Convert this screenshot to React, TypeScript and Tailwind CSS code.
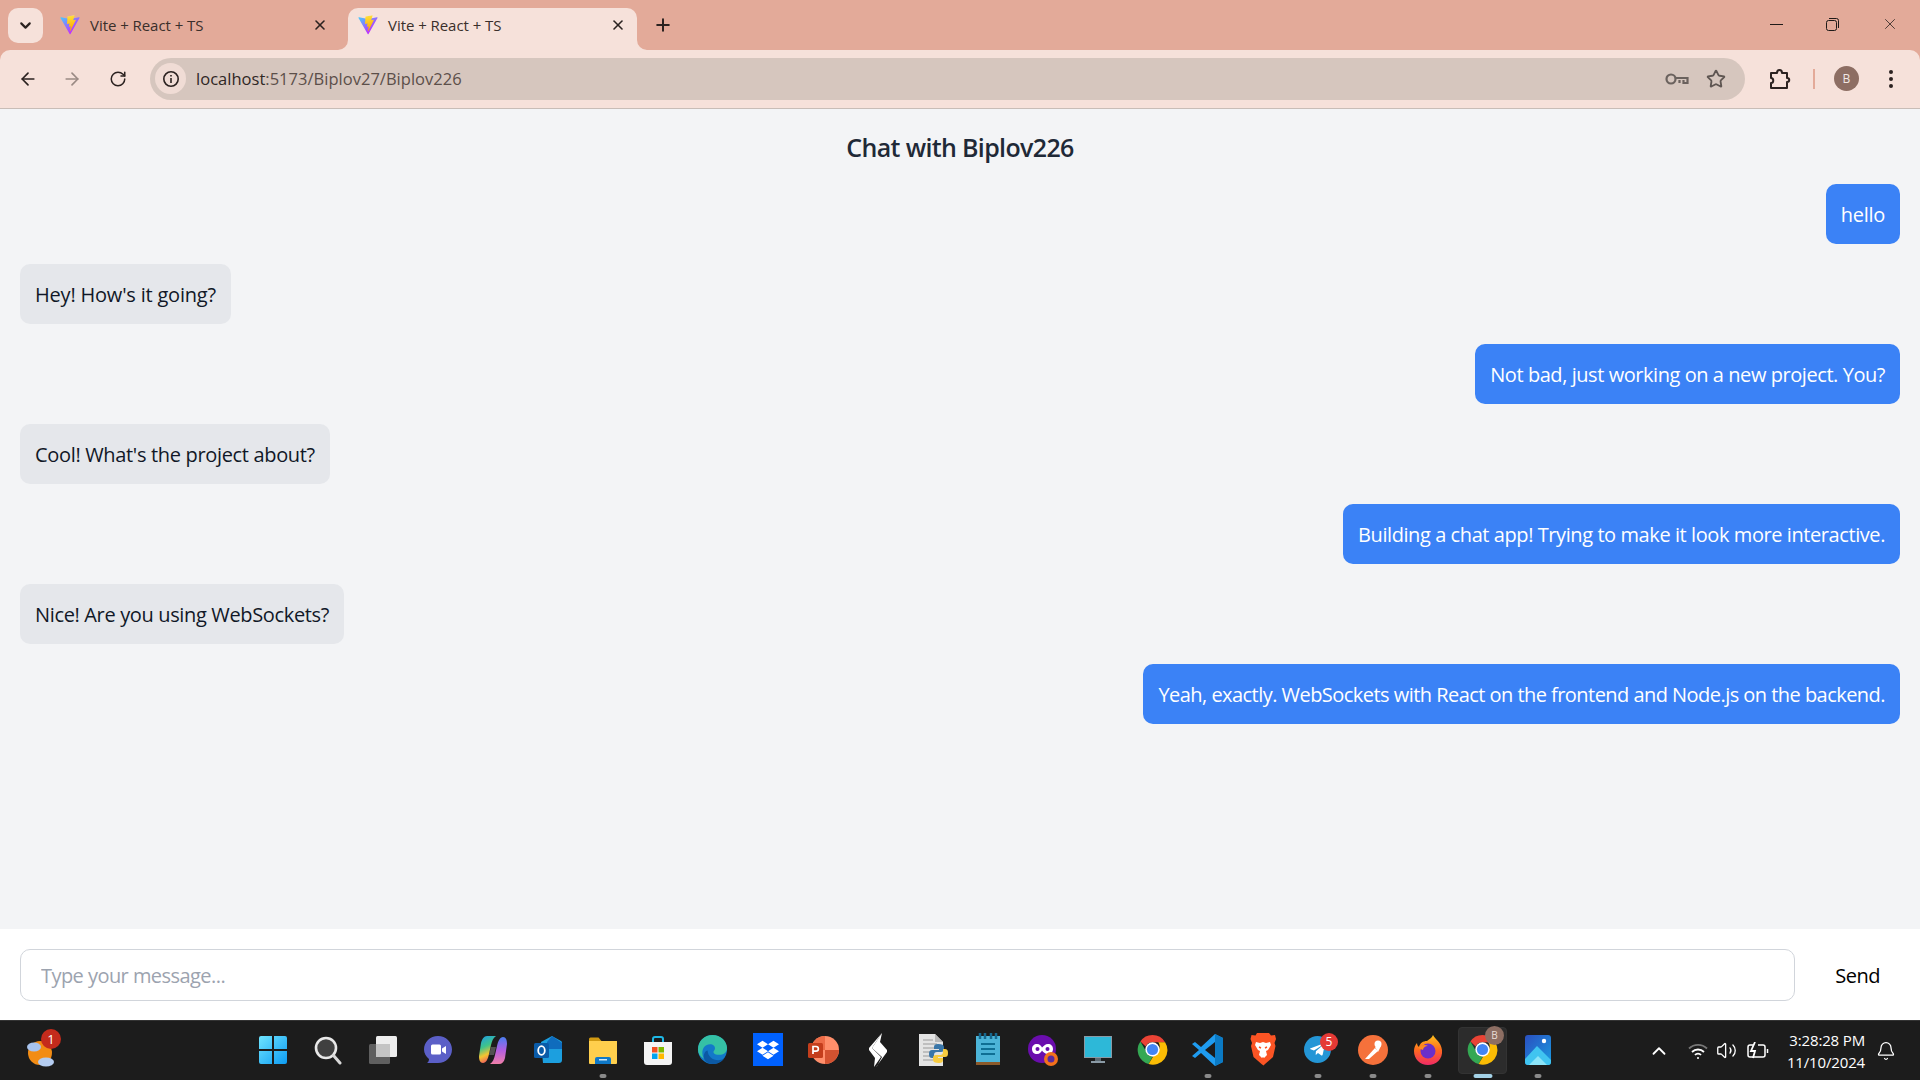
import React from 'react';
import { ArrowLeft, ArrowRight, RotateCw, Star, X, Plus, ChevronDown, ChevronUp, Bell, Volume2 } from 'lucide-react';
import { FaDropbox, FaTelegramPlane } from 'react-icons/fa';

const font = 'font-["Open_Sans","Noto_Sans",sans-serif]';

const messages = [
  { text: 'hello', mine: true, fit: 'tracking-[-0.3px]' },
  { text: "Hey! How's it going?", mine: false, fit: 'tracking-[-0.2px]' },
  { text: 'Not bad, just working on a new project. You?', mine: true, fit: 'tracking-[-0.44px]' },
  { text: "Cool! What's the project about?", mine: false, fit: 'tracking-[-0.33px]' },
  { text: 'Building a chat app! Trying to make it look more interactive.', mine: true, fit: 'tracking-[-0.42px]' },
  { text: 'Nice! Are you using WebSockets?', mine: false, fit: 'tracking-[-0.35px]' },
  { text: 'Yeah, exactly. WebSockets with React on the frontend and Node.js on the backend.', mine: true, fit: 'tracking-[-0.54px]' },
];

const ViteLogo = ({ id }: { id: string }) => (
  <svg width="20" height="20" viewBox="0 0 410 404">
    <defs>
      <linearGradient id={id + 'a'} x1="6" y1="33" x2="235" y2="344" gradientUnits="userSpaceOnUse">
        <stop stopColor="#41D1FF" />
        <stop offset="1" stopColor="#BD34FE" />
      </linearGradient>
      <linearGradient id={id + 'b'} x1="194" y1="8" x2="236" y2="292" gradientUnits="userSpaceOnUse">
        <stop stopColor="#FFEA83" />
        <stop offset="0.08" stopColor="#FFDD35" />
        <stop offset="1" stopColor="#FFA800" />
      </linearGradient>
    </defs>
    <path fill={`url(#${id}a)`} d="M399.641 59.5246L215.643 388.545C211.844 395.338 202.084 395.378 198.228 388.618L10.5817 59.5563C6.38087 52.1896 12.6802 43.2665 21.0281 44.7586L205.223 77.6824C206.398 77.8924 207.601 77.8904 208.776 77.6763L389.119 44.8058C397.439 43.2894 403.768 52.1434 399.641 59.5246Z" />
    <path fill={`url(#${id}b)`} d="M292.965 1.5744L156.801 28.2552C154.563 28.6937 152.906 30.5903 152.771 32.8664L144.395 174.33C144.198 177.662 147.258 180.248 150.51 179.498L188.42 170.749C191.967 169.931 195.172 173.055 194.443 176.622L183.18 231.775C182.422 235.487 185.907 238.661 189.532 237.56L212.947 230.446C216.577 229.344 220.065 232.527 219.297 236.242L201.398 322.875C200.278 328.294 207.486 331.249 210.492 326.603L212.5 323.5L323.454 102.072C325.312 98.3645 322.108 94.137 318.036 94.9228L279.014 102.454C275.347 103.161 272.227 99.746 273.262 96.1583L298.731 7.86689C299.767 4.27314 296.636 0.855181 292.965 1.5744Z" />
  </svg>
);

const Tab = ({ id, active }: { id: string; active?: boolean }) => (
  <div className={`relative w-[289px] h-[42px] flex items-center pl-[10px] pb-[8px] rounded-t-[10px] ${active ? 'bg-[#f6e1da]' : ''}`}>
    {active && (
      <>
        <svg className="absolute left-[-10px] bottom-0" width="10" height="10"><path d="M10 0V10H0A10 10 0 0 0 10 0Z" fill="#f6e1da" /></svg>
        <svg className="absolute right-[-10px] bottom-0" width="10" height="10"><path d="M0 0V10H10A10 10 0 0 1 0 0Z" fill="#f6e1da" /></svg>
      </>
    )}
    <ViteLogo id={id} />
    <span className="ml-[10px] text-[15px] tracking-[-0.05px] text-[#3a2f2b]">Vite + React + TS</span>
    <X className="ml-auto mr-[11px] text-[#2b2220]" size={16} strokeWidth={2.4} />
  </div>
);

const ChromeLogo = () => (
  <svg width="31" height="31" viewBox="0 0 32 32">
    <path d="M16 1a15 15 0 0 1 13 7.5H16A7.5 7.5 0 0 0 9 13L3.5 7.7A15 15 0 0 1 16 1Z" fill="#ea4335" />
    <path d="M3.5 7.7 9.5 18a7.5 7.5 0 0 0 6.5 5.5L12 31A15 15 0 0 1 3.5 7.7Z" fill="#34a853" />
    <path d="M29 8.5A15 15 0 0 1 12 31l6.5-11a7.5 7.5 0 0 0 3.5-11.5Z" fill="#fbbc04" />
    <circle cx="16" cy="16" r="7.4" fill="#fff" />
    <circle cx="16" cy="16" r="5.8" fill="#4285f4" />
  </svg>
);

const Dot = ({ active }: { active?: boolean }) => (
  <span className={`absolute bottom-[2px] left-1/2 -translate-x-1/2 h-[4px] rounded-full ${active ? 'w-[19px] bg-[#a5d3e8]' : 'w-[7px] bg-[#8a8a8a]'}`} />
);

const Slot = ({ children, dot, active }: { children: React.ReactNode; dot?: boolean; active?: boolean }) => (
  <div className={`relative w-[55px] h-[59px] flex items-center justify-center pb-[2px] ${active ? 'after:absolute after:inset-x-[3px] after:inset-y-[6px] after:rounded-[4px] after:bg-[#2c2c2c] after:border after:border-[#333]' : ''}`}>
    <div className="relative z-10 flex items-center justify-center">{children}</div>
    {dot && <span className="z-10"><Dot active={active} /></span>}
  </div>
);

const taskIcons: { icon: React.ReactNode; dot?: boolean; active?: boolean }[] = [
  {
    icon: (
      <svg width="30" height="30" viewBox="0 0 30 30">
        <defs>
          <linearGradient id="win" x1="0" y1="0" x2="1" y2="1">
            <stop stopColor="#6fe5ff" />
            <stop offset="1" stopColor="#0d9bf2" />
          </linearGradient>
        </defs>
        <path fill="url(#win)" d="M1 3a2 2 0 0 1 2-2h11v13H1ZM16 1h11a2 2 0 0 1 2 2v11H16ZM1 16h13v13H3a2 2 0 0 1-2-2ZM16 16h13v11a2 2 0 0 1-2 2H16Z" />
      </svg>
    ),
  },
  {
    icon: (
      <svg width="30" height="30" viewBox="0 0 30 30">
        <circle cx="13" cy="13" r="10" fill="#404040" stroke="#e8e8e8" strokeWidth="2.6" />
        <path d="M20.5 20.5 27 28" stroke="#d8d8d8" strokeWidth="3" strokeLinecap="round" />
      </svg>
    ),
  },
  {
    icon: (
      <svg width="30" height="30" viewBox="0 0 30 30">
        <rect x="8" y="1" width="21" height="21" rx="1.5" fill="#eeeeee" />
        <rect x="1" y="9" width="21" height="20" rx="1.5" fill="#6b6b6b" fillOpacity="0.85" />
        <rect x="8" y="9" width="14" height="13" fill="#c4c4c4" />
      </svg>
    ),
  },
  {
    icon: (
      <svg width="30" height="30" viewBox="0 0 30 30">
        <path d="M15 1c8 0 14 6 14 13.500S23 28 15 28H4c1.500-1 2-2.500 2-4C3 21.500 1 18.500 1 14.500 1 7 7 1 15 1Z" fill="#5b5fc7" />
        <rect x="8" y="9.500" width="10" height="10" rx="1.500" fill="#fff" />
        <path d="M19 13.500 23 11v8l-4-2.500Z" fill="#fff" />
      </svg>
    ),
  },
  {
    icon: (
      <svg width="30" height="30" viewBox="0 0 30 30">
        <defs>
          <linearGradient id="cp1" x1="0" y1="0" x2="0.3" y2="1">
            <stop stopColor="#1d9be8" />
            <stop offset="0.45" stopColor="#3fc48a" />
            <stop offset="0.75" stopColor="#f4c430" />
            <stop offset="1" stopColor="#f0645a" />
          </linearGradient>
          <linearGradient id="cp2" x1="0.5" y1="0" x2="0.5" y2="1">
            <stop stopColor="#4a7df0" />
            <stop offset="0.5" stopColor="#b45ee0" />
            <stop offset="1" stopColor="#f07fa8" />
          </linearGradient>
        </defs>
        <path fill="url(#cp1)" d="M9 1h9c-3 2-4 5-5 9l-2 9c-1 5-3 9-6 9-3 0-4-3-4-7L3 8c1-4 3-7 6-7Z" />
        <path fill="url(#cp2)" d="M21 29h-9c3-2 4-5 5-9l2-9c1-5 3-9 6-9 3 0 4 3 4 7l-2 14c-1 4-3 6-6 6Z" />
        <path fill="#f0f0f0" d="M13 12h5l-2 8h-5Z" fillOpacity="0.25" />
      </svg>
    ),
  },
  {
    icon: (
      <svg width="30" height="30" viewBox="0 0 30 30">
        <path d="M8 7 19 1l9 5a2 2 0 0 1 1 2v17a3 3 0 0 1-3 3H10Z" fill="#1c9fdf" />
        <path d="M14 7 19 1l10 7v6H14Z" fill="#0f6cbd" />
        <rect x="1" y="8" width="15" height="15" rx="1.500" fill="#0a5ba8" />
        <ellipse cx="8.500" cy="15.500" rx="3.300" ry="4.300" fill="none" stroke="#fff" strokeWidth="1.800" />
      </svg>
    ),
  },
  {
    dot: true,
    icon: (
      <svg width="30" height="30" viewBox="0 0 30 30">
        <path d="M1 4a1.500 1.500 0 0 1 1.500-1.500h8l3 3.500H1Z" fill="#d19a12" />
        <path d="M1 6h28v22a1 1 0 0 1-1 1H2a1 1 0 0 1-1-1Z" fill="#ffcf4d" />
        <path d="M7 24a2 2 0 0 1 2-2h12a2 2 0 0 1 2 2v5H7Z" fill="#0f78c7" />
        <rect x="11" y="24" width="8" height="1.500" fill="#cfe8f8" />
      </svg>
    ),
  },
  {
    icon: (
      <svg width="30" height="32" viewBox="0 0 30 32">
        <path d="M10 8V5a2 2 0 0 1 2-2h6a2 2 0 0 1 2 2v3" fill="none" stroke="#1eb8e6" strokeWidth="2" />
        <path d="M1 8h28v20a3 3 0 0 1-3 3H4a3 3 0 0 1-3-3Z" fill="#f4f4f4" />
        <rect x="9" y="13" width="5.500" height="5.500" fill="#f25022" />
        <rect x="15.500" y="13" width="5.500" height="5.500" fill="#7fba00" />
        <rect x="9" y="19.500" width="5.500" height="5.500" fill="#00a4ef" />
        <rect x="15.500" y="19.500" width="5.500" height="5.500" fill="#ffb900" />
      </svg>
    ),
  },
  {
    icon: (
      <svg width="31" height="31" viewBox="0 0 32 32">
        <circle cx="16" cy="16" r="15" fill="#1379c9" />
        <path d="M1 16C1 7 8 1 16 1c8 0 15 6 15 13.500 0 5-4 7-8 7-3 0-6-1-6-3 0-1 1-1.500 1.500-3 .5-3-2-5-5-5-5 0-8 4-8 9 0 2 .5 4 1.500 6C3 23 1 20 1 16Z" fill="#35c1a5" />
        <path d="M11 17c0 6 5 10 11 10 2 0 4-.5 6-2-2 4-7 6-12 6-5 0-9-3-9-8 0-3 2-6 4-6Z" fill="#0c59a4" />
      </svg>
    ),
  },
  {
    icon: (
      <div className="w-[30px] h-[33px] bg-[#0061fe] flex items-center justify-center text-white">
        <FaDropbox size={22} />
      </div>
    ),
  },
  {
    icon: (
      <svg width="32" height="32" viewBox="0 0 32 32">
        <circle cx="18" cy="16" r="14" fill="#ff8f6b" />
        <path d="M18 16h14a14 14 0 0 1-14 14Z" fill="#d35230" />
        <path d="M18 2v14H4A14 14 0 0 1 18 2Z" fill="#ed6c47" />
        <rect x="1" y="9" width="15" height="15" rx="1.500" fill="#c43e1c" />
        <path d="M6 20V12.500h3a2.300 2.300 0 0 1 0 4.700H6" fill="none" stroke="#fff" strokeWidth="1.700" />
      </svg>
    ),
  },
  {
    icon: (
      <svg width="18" height="34" viewBox="0 0 18 34">
        <path d="M13 0 3 15l9 9-7 10 1-9-6-8c-.5-.5-.5-1 0-2Z" fill="#fff" />
        <path d="M13 0 11 9l7 8c.5.5.5 1 0 2L7 34l1-1 5-9-10-9Z" fill="#fff" />
      </svg>
    ),
  },
  {
    icon: (
      <svg width="30" height="34" viewBox="0 0 30 34">
        <path d="M1 1h16l8 8v24H1Z" fill="#e4e4e4" />
        <path d="M5 7h10M5 11h14M5 15h14M5 19h10M5 23h10M5 27h10" stroke="#9a9a9a" strokeWidth="1" />
        <path d="M17 1v8h8Z" fill="#b8b8b8" />
        <path d="M20 11c-3 0-4 1-4 3v2h5v1h-7c-2 0-3 1-3 4 0 3 1 4 3 4h2v-3c0-2 1-3 3-3h4c2 0 3-1 3-3v-2c0-2-2-3-6-3Z" fill="#3a76a8" />
        <path d="M21 30c3 0 4-1 4-3v-2h-5v-1h7c2 0 3-1 3-4s-1-4-3-4h-2v3c0 2-1 3-3 3h-4c-2 0-3 1-3 3v2c0 2 2 3 6 3Z" fill="#f7cb3f" />
      </svg>
    ),
  },
  {
    icon: (
      <svg width="26" height="33" viewBox="0 0 26 33">
        <rect x="1" y="3" width="24" height="27" fill="#4cb4d8" />
        <rect x="1" y="29" width="24" height="3" fill="#8b5a2b" />
        <path d="M5 0v6M10 0v6M16 0v6M21 0v6" stroke="#17688e" strokeWidth="2.500" />
        <path d="M6 11h14M6 16h14M6 21h14" stroke="#0f6f94" strokeWidth="2.200" />
      </svg>
    ),
  },
  {
    icon: (
      <svg width="30" height="32" viewBox="0 0 30 32">
        <circle cx="14" cy="15" r="14" fill="#6a0dad" />
        <path d="M9 10c-3 0-5 2-5 5s2 5 5 5 4-2 5-3.500C15 18 17 20 20 20s5-2 5-5-2-5-5-5-4 2-6 3.500C13 12 12 10 9 10Z" fill="#fff" />
        <circle cx="9.500" cy="15" r="2" fill="#6a0dad" />
        <circle cx="19.500" cy="15" r="2" fill="#6a0dad" />
        <circle cx="23" cy="25" r="7" fill="#f2711c" />
        <circle cx="23" cy="25" r="3.500" fill="#5b2a9d" />
      </svg>
    ),
  },
  {
    icon: (
      <svg width="30" height="30" viewBox="0 0 30 30">
        <rect x="1" y="1" width="28" height="22" fill="#8a9aa5" />
        <rect x="2" y="2" width="26" height="20" fill="#2db8d8" />
        <rect x="12" y="23" width="6" height="3" fill="#5c6a73" />
        <rect x="8" y="26" width="14" height="2" fill="#8a9aa5" />
      </svg>
    ),
  },
  { icon: <ChromeLogo /> },
  {
    dot: true,
    icon: (
      <svg width="32" height="34" viewBox="0 0 32 34">
        <path d="M23 1 31 5v24l-8 4L9 20l-6 5-3-2 7-6-7-6 3-2 6 5Z" fill="#1f9cf0" />
        <path d="M23 9v16l-10-8Z" fill="#1c1c1c" />
        <path d="M23 1l8 4v24l-8 4Z" fill="#0b7ac4" />
      </svg>
    ),
  },
  {
    icon: (
      <svg width="26" height="33" viewBox="0 0 26 33">
        <path d="M7 0h12l2 2.500 4-.5 1 4-1.500 4 1 3-2.500 11-8 7-1.500 1.500L11.500 31l-8-7L1 13l1-3L.5 6l1-4 4 .5Z" fill="#fb5424" />
        <path d="M6 9l4 1 3-1 3 1 4-1 1 3-3 5-2 1 1 4-3 3-1-1-1 1-3-3 1-4-2-1-3-5Z" fill="#fff" />
        <path d="M9 14l2 1M17 14l-2 1" stroke="#fb5424" strokeWidth="1.400" />
      </svg>
    ),
  },
  {
    dot: true,
    icon: (
      <div className="relative">
        <div className="w-[27px] h-[27px] rounded-full bg-[#2496d6] flex items-center justify-center text-white">
          <FaTelegramPlane size={17} />
        </div>
        <span className="absolute -top-[3px] -right-[7px] w-[18px] h-[18px] rounded-full bg-[#e53935] text-white text-[12px] leading-[18px] text-center">5</span>
      </div>
    ),
  },
  {
    dot: true,
    icon: (
      <svg width="30" height="30" viewBox="0 0 30 30">
        <circle cx="15" cy="15" r="15" fill="#f5713b" />
        <path d="M7 24 17 13l3 3-9 8Z" fill="#fff" />
        <circle cx="20" cy="9" r="3.500" fill="#fff" />
        <path d="M17 12l6-1-3 6Z" fill="#fff" />
      </svg>
    ),
  },
  {
    dot: true,
    icon: (
      <svg width="30" height="32" viewBox="0 0 30 32">
        <defs>
          <linearGradient id="ff" x1="0.5" y1="0" x2="0.5" y2="1">
            <stop stopColor="#ffc21c" />
            <stop offset="0.5" stopColor="#ff6a1f" />
            <stop offset="1" stopColor="#f02a66" />
          </linearGradient>
        </defs>
        <path d="M20 1c2 4 8 7 9 15 1 9-6 15-14 15S1 25 1 17c0-3 1-6 3-8 0 2 1 3 2 4 1-4 4-6 8-6 2-2 5-3 6-6Z" fill="url(#ff)" />
        <circle cx="15" cy="17" r="7.500" fill="#6a2fc9" />
        <path d="M5 14c3-3 7-4 10-2-3 0-5 2-5 4Z" fill="#ff8a1f" />
      </svg>
    ),
  },
  {
    dot: true,
    active: true,
    icon: (
      <div className="relative">
        <ChromeLogo />
        <span className="absolute -top-[8px] -right-[6px] w-[19px] h-[19px] rounded-full bg-[#8d6e63] text-[#e8dcd6] text-[10px] leading-[19px] text-center">B</span>
      </div>
    ),
  },
  {
    dot: true,
    icon: (
      <svg width="26" height="30" viewBox="0 0 26 30">
        <defs>
          <linearGradient id="ph" x1="0" y1="0" x2="1" y2="1">
            <stop stopColor="#2a4fc0" />
            <stop offset="1" stopColor="#1a9be0" />
          </linearGradient>
        </defs>
        <rect width="26" height="30" rx="3" fill="url(#ph)" />
        <circle cx="19" cy="6" r="2.200" fill="#fff" />
        <path d="M0 24 12 11l14 14v2a3 3 0 0 1-3 3H3a3 3 0 0 1-3-3Z" fill="#40c4f0" />
        <path d="M4 30l9-9 9 9Z" fill="#8be4f8" />
      </svg>
    ),
  },
];

const App: React.FC = () => {
  return (
    <div className={`w-[1920px] h-[1080px] flex flex-col overflow-hidden ${font}`}>
      {/* browser frame */}
      <div className="h-[50px] bg-[#e3aa99] flex items-start pt-[8px] pl-[8px]">
        <div className="w-[35px] h-[35px] rounded-[10px] bg-[#f6e1da] flex items-center justify-center mr-[7px]">
          <ChevronDown size={17} strokeWidth={3} className="text-[#2b2220]" />
        </div>
        <Tab id="t1" />
        <div className="w-[9px]" />
        <Tab id="t2" active />
        <Plus size={20} strokeWidth={2.4} className="ml-[16px] mt-[7px] text-[#2b2220]" />
        <div className="ml-auto flex items-center h-[32px] text-[#1f1a18]">
          <div className="w-[56px] flex justify-center"><div className="w-[13px] h-px bg-[#1f1a18]" /></div>
          <div className="w-[56px] flex justify-center">
            <svg width="13" height="13" viewBox="0 0 13 13" fill="none" stroke="#1f1a18">
              <rect x="0.500" y="2.500" width="10" height="10" rx="2" />
              <path d="M3 .5h7.500a2 2 0 0 1 2 2V10" />
            </svg>
          </div>
          <div className="w-[60px] flex justify-center"><X size={18} strokeWidth={1} /></div>
        </div>
      </div>
      <div className="h-[59px] bg-[#e3aa99]">
        <div className="h-full bg-[#f6e1da] rounded-t-[10px] border-b border-[#c8bdb7] flex items-center pb-[1px]">
          <ArrowLeft size={20} strokeWidth={2} className="ml-[18px] text-[#2b2220]" />
          <ArrowRight size={20} strokeWidth={2} className="ml-[24px] text-[#9a8a84]" />
          <RotateCw size={18} strokeWidth={2} className="ml-[27px] text-[#2b2220]" />
          <div className="ml-[23px] w-[1595px] h-[42px] rounded-full bg-[#d6c6be] flex items-center pl-[5px] pr-[19px]">
            <div className="w-[31px] h-[31px] rounded-full bg-[#f0dcd5] flex items-center justify-center">
              <svg width="18" height="18" viewBox="0 0 18 18" fill="none" stroke="#2b2220" strokeWidth="1.600">
                <circle cx="9" cy="9" r="7.200" />
                <path d="M9 8v5M9 5v1.600" />
              </svg>
            </div>
            <span className="ml-[10px] pt-[1px] text-[16.5px] tracking-[0.02px] text-[#2f2725]">localhost<span className="text-[#5c4f4a]">:5173/Biplov27/Biplov226</span></span>
            <svg className="ml-auto" width="24" height="14" viewBox="0 0 24 14" fill="none" stroke="#6b625e" strokeWidth="2.200">
              <circle cx="6" cy="7" r="4.500" />
              <path d="M10 6h12.500v5h-4V8M14.500 8v3" />
            </svg>
            <Star size={20} strokeWidth={2.2} className="ml-[17px] text-[#5f5652]" />
          </div>
          <svg className="ml-[24px]" width="22" height="22" viewBox="0 0 22 22" fill="none" stroke="#2b2220" strokeWidth="2" strokeLinejoin="round">
            <path d="M2 5h6c0-4 5-4 5 0h5v5c3 0 3 4 0 4v6H2v-5c3 0 3-5 0-5Z" />
          </svg>
          <div className="ml-[22px] w-[2px] h-[20px] bg-[#e3aa99]" />
          <div className="ml-[19px] w-[25px] h-[25px] rounded-full bg-[#8d6e63] text-[#f2e8e3] text-[12px] leading-[25px] text-center">B</div>
          <svg className="ml-[29px]" width="6" height="20" viewBox="0 0 6 20" fill="#2b2220">
            <circle cx="3" cy="3" r="2" />
            <circle cx="3" cy="10" r="2" />
            <circle cx="3" cy="17" r="2" />
          </svg>
        </div>
      </div>

      {/* chat page */}
      <main className="flex-1 min-h-0 bg-[#f3f4f6] flex flex-col">
        <div className="flex-1 min-h-0 pt-[21px] px-[20px]">
          <h1 className="text-[25px] leading-[35px] font-semibold tracking-[-0.65px] text-[#1f2937] text-center mb-[19px]">Chat with Biplov226</h1>
          <div className="flex flex-col gap-[20px]">
            {messages.map((m) => (
              <div key={m.text} className={`flex ${m.mine ? 'justify-end' : 'justify-start'}`}>
                <div className={`px-[15px] pt-[16px] pb-[14px] text-[20px] leading-[30px] rounded-[10px] ${m.fit} ${m.mine ? 'bg-[#3b82f6] text-white' : 'bg-[#e5e7eb] text-[#111827]'}`}>
                  {m.text}
                </div>
              </div>
            ))}
          </div>
        </div>
        <div className="h-[91px] bg-white flex items-start pt-[20px] px-[20px]">
          <input
            className="flex-1 h-[52px] border border-[#d1d5db] rounded-[10px] px-[20px] pt-[1px] text-[20px] tracking-[-0.55px] placeholder:text-[#9ca3af] outline-none"
            placeholder="Type your message..."
          />
          <button className="ml-[20px] h-[52px] pt-[1px] px-[20px] text-[20px] font-medium tracking-[-0.5px] text-black">Send</button>
        </div>
      </main>

      {/* taskbar */}
      <div className="h-[60px] bg-[#1c1c1c] border-t border-[#333] flex items-center text-white">
        <div className="w-[245px] pl-[26px]">
          <div className="relative w-[32px] h-[32px]">
            <svg width="32" height="32" viewBox="0 0 32 32">
              <circle cx="14" cy="18" r="12" fill="#f28c14" />
              <ellipse cx="8" cy="12" rx="7" ry="4.500" fill="#a8c4ee" />
              <ellipse cx="20" cy="27" rx="8" ry="4.500" fill="#b4ccf0" />
            </svg>
            <span className="absolute -top-[6px] left-[15px] w-[20px] h-[20px] rounded-full bg-[#c42b1c] text-white text-[13px] leading-[20px] text-center">1</span>
          </div>
        </div>
        {taskIcons.map((t, i) => (
          <Slot key={i} dot={t.dot} active={t.active}>{t.icon}</Slot>
        ))}
        <div className="ml-auto flex items-center">
          <ChevronUp size={22} strokeWidth={2} />
          <svg className="ml-[18px]" width="20" height="18" viewBox="0 0 20 18" fill="none" stroke="#fff" strokeWidth="1.800">
            <path d="M1 6.500a13 13 0 0 1 18 0" stroke="#777" />
            <path d="M4 10a8.500 8.500 0 0 1 12 0" />
            <path d="M7 13a4 4 0 0 1 6 0" />
            <circle cx="10" cy="16" r="1" fill="#fff" stroke="none" />
          </svg>
          <Volume2 className="ml-[8px]" size={21} strokeWidth={1.500} />
          <svg className="ml-[10px]" width="22" height="18" viewBox="0 0 22 18" fill="none" stroke="#fff" strokeWidth="1.500">
            <path d="M6 3H3a2 2 0 0 0-2 2v8a2 2 0 0 0 2 2h13a2 2 0 0 0 2-2V5a2 2 0 0 0-2-2h-5" />
            <path d="M20.500 7v4" />
            <path d="M8 0 4 9h4l-2 7" strokeWidth="1.800" />
          </svg>
          <div className="ml-[17px] w-[79px] text-right text-[15px] leading-[22px] tracking-[-0.15px]">
            <div>3:28:28 PM</div>
            <div>11/10/2024</div>
          </div>
          <Bell className="ml-[11px] mr-[24px]" size={20} strokeWidth={1.500} />
        </div>
      </div>
    </div>
  );
};

export default App;
